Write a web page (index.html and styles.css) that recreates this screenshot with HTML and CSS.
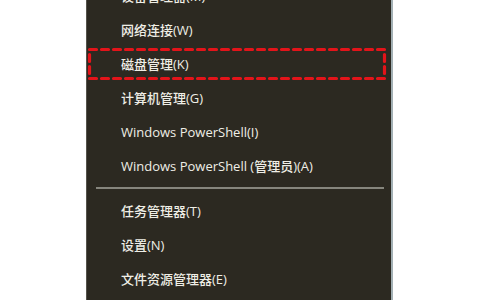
FILE: index.html
```html
<!DOCTYPE html>
<html lang="zh-CN">
<head>
<meta charset="utf-8">
<link rel="stylesheet" href="styles.css">
</head>
<body>
<div class="menu">
  <ul class="list">
    <li class="item">设备管理器(M)</li>
    <li class="item">网络连接(W)</li>
    <li class="item marked">磁盘管理(K)
      <svg class="mark" width="300" height="34" viewBox="0 0 300 34"><rect x="2.5" y="2.5" width="295" height="29" fill="none" stroke="#e3141a" stroke-width="3.2" stroke-dasharray="7 5" stroke-linecap="round"/></svg>
    </li>
    <li class="item">计算机管理(G)</li>
    <li class="item">Windows PowerShell(I)</li>
    <li class="item">Windows PowerShell (管理员)(A)</li>
    <li class="sep"></li>
    <li class="item">任务管理器(T)</li>
    <li class="item">设置(N)</li>
    <li class="item">文件资源管理器(E)</li>
  </ul>
</div>
</body>
</html>
```
FILE: styles.css
```css
html, body {
  margin: 0;
  padding: 0;
  background: #ffffff;
  height: 300px;
  overflow: hidden;
}
.menu {
  margin-left: 86px;
  width: 304px;
  height: 300px;
  background: #2c2921;
  border-left: 1px solid #55534c;
  border-right: 2px solid #a3b0b4;
  overflow: hidden;
}
.list {
  list-style: none;
  margin: -21px 0 0 0;
  padding: 0;
}
.item {
  position: relative;
  height: 34px;
  line-height: 34px;
  padding-left: 34px;
  font-family: "Open Sans", "Noto Sans CJK SC", sans-serif;
  font-size: 13px;
  font-weight: 500;
  color: #efeee6;
  white-space: nowrap;
}
.sep {
  height: 11px;
  position: relative;
}
.sep::after {
  content: "";
  position: absolute;
  left: 9px;
  right: 7px;
  top: 4px;
  height: 2px;
  background: #86857d;
}
.mark {
  position: absolute;
  left: 0;
  top: 0;
  display: block;
}
```
